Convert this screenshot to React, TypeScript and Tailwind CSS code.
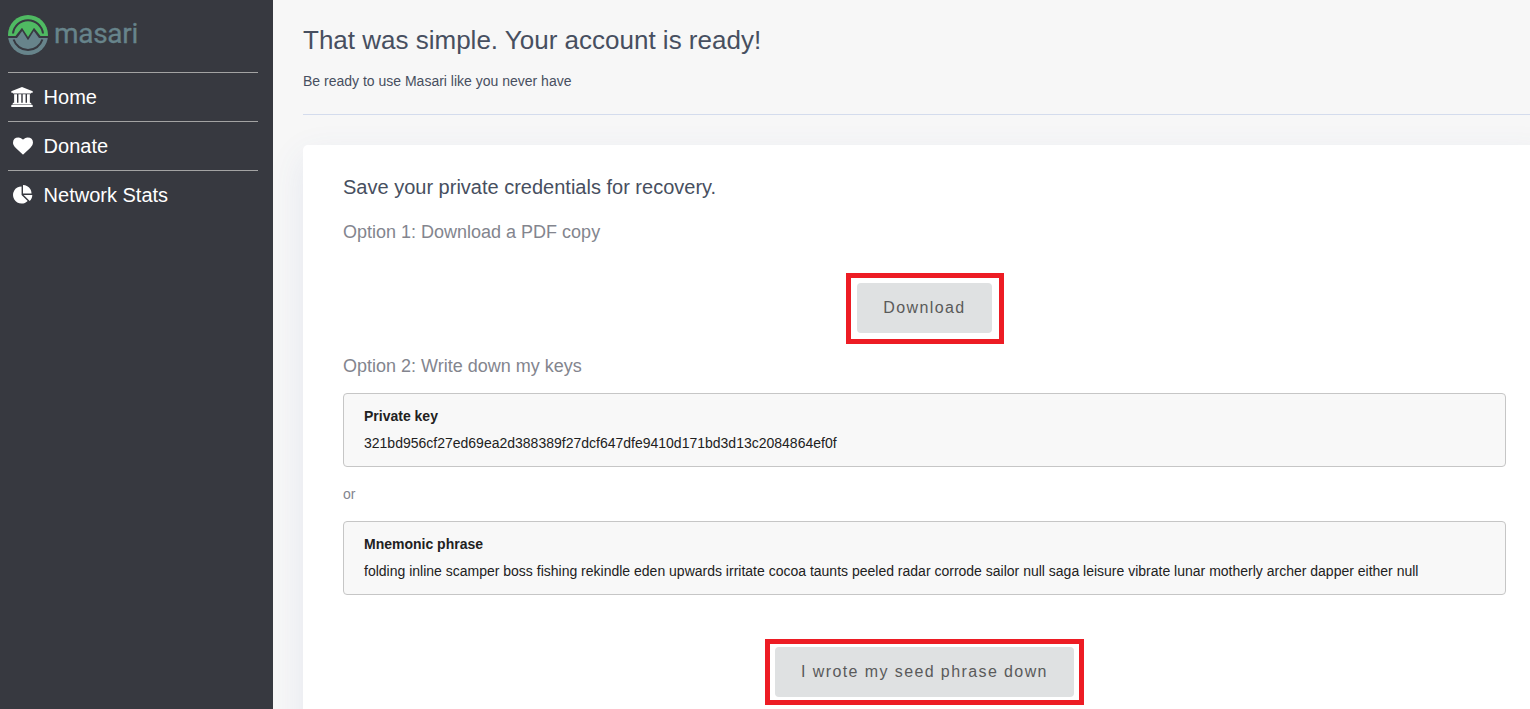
import type { ReactNode } from "react";

const ICONS = {
  home: {
    box: "0 0 1920 1792",
    size: "w-[22px] h-[20px] mr-[2px]",
    d: "M960 0l960 384v128h-128q0 26-20.5 45t-48.5 19h-1526q-28 0-48.5-19t-20.5-45h-128v-128zm-704 640h256v768h128v-768h256v768h128v-768h256v768h128v-768h256v768h59q28 0 48.5 19t20.5 45v64h-1664v-64q0-26 20.5-45t48.5-19h59v-768zm1595 960q28 0 48.5 19t20.5 45v128h-1920v-128q0-26 20.5-45t48.5-19h1782z",
  },
  heart: {
    box: "0 0 1792 1792",
    size: "w-[20px] h-[20px]",
    d: "M896 1664q-26 0-44-18l-624-602q-10-8-27.5-26t-55.5-65.5-68-97.5-53.5-121-23.5-138q0-220 127-344t351-124q62 0 126.5 21.5t120 58 95.5 68.5 76 68q36-36 76-68t95.5-68.5 120-58 126.5-21.5q224 0 351 124t127 344q0 221-229 450l-623 600q-18 18-44 18z",
  },
  pie: {
    box: "0 0 1792 1792",
    size: "w-[20px] h-[20px]",
    d: "M768 890l546 546q-106 108-247.5 168t-298.5 60q-209 0-385.5-103t-279.5-279.5-103-385.5 103-385.5 279.5-279.5 385.5-103v762zm187 6h773q0 157-60 298.5t-168 247.5zm709-128h-768v-768q209 0 385.5 103t279.5 279.5 103 385.5z",
  },
};

function Logo() {
  return (
    <div className="flex h-[40px] items-center">
      <svg viewBox="0 0 40 40" className="h-[40px] w-[40px] shrink-0">
        <clipPath id="disc">
          <circle cx="20" cy="20" r="20" />
        </clipPath>
        <g clipPath="url(#disc)">
          <path fill="#4fba62" d="M0 0H40V21H32.500L26 12.800L20 22L14 12.800L7.500 21H0Z" />
          <path fill="#67848b" d="M0 40V23H9L14.200 16L20 25.300L25.800 16L31 23H40V40Z" />
        </g>
        <path fill="none" stroke="#373940" strokeWidth="2" d="M5 18.500A15.100 15.100 0 0 1 35 18.500" />
        <path fill="none" stroke="#373940" strokeWidth="2" d="M5.600 24.500A15.100 15.100 0 0 0 34.400 24.500" />
      </svg>
      <span className="relative -top-px ml-[6px] font-['Roboto',sans-serif] text-[28px] font-normal leading-[36px] tracking-[-0.3px] text-[#67848b] [-webkit-text-stroke:0.3px_#67848b]">
        masari
      </span>
    </div>
  );
}

function NavItem({ icon, children }: { icon: keyof typeof ICONS; children: ReactNode }) {
  const { box, size, d } = ICONS[icon];
  return (
    <a className="flex h-[49px] items-center border-t border-[#a3a3a3] pl-[2px] text-[20px] text-white">
      <span className="flex w-[25px] justify-center">
        <svg viewBox={box} className={size} fill="currentColor">
          <path d={d} />
        </svg>
      </span>
      <span className="ml-[8.6px]">{children}</span>
    </a>
  );
}

function HighlightedButton({ width, ring, children }: { width: string; ring: string; children: ReactNode }) {
  return (
    <div className={`relative ${width}`}>
      <button className="block h-[50px] w-full whitespace-nowrap rounded-[4px] bg-[#dfe1e2] text-[16px] tracking-[1.4px] text-[#5a5a5a]">
        {children}
      </button>
      <span className={`pointer-events-none absolute border-[5px] border-[#ed1c24] ${ring}`} />
    </div>
  );
}

function KeyBox({ title, value }: { title: string; value: string }) {
  return (
    <section className="h-[74px] rounded-[4px] border border-[#c6c6c6] bg-[#f8f8f8] px-[20px] pt-[9px] text-[14px] leading-[27px] text-[#212121]">
      <h4 className="font-bold">{title}</h4>
      <p>{value}</p>
    </section>
  );
}

export default function App() {
  return (
    <div className="flex h-[709px] w-[1530px] overflow-hidden bg-[#f7f7f7] font-['Liberation_Sans',Arial,sans-serif]">
      <aside className="z-10 w-[273px] shrink-0 bg-[#373940] pl-[8px] pr-[15px] pt-[15px]">
        <Logo />
        <nav className="mt-[17px]">
          <NavItem icon="home">Home</NavItem>
          <NavItem icon="heart">Donate</NavItem>
          <NavItem icon="pie">Network Stats</NavItem>
        </nav>
      </aside>
      <main className="w-[1273px] shrink-0 pl-[30px]">
        <header className="h-[115px] border-b border-[#d4dced] pt-[24px] text-[#474f60]">
          <h1 className="text-[26px] leading-[32px]">That was simple. Your account is ready!</h1>
          <p className="mt-[15px] text-[14px] leading-[20px]">Be ready to use Masari like you never have</p>
        </header>
        <div className="mt-[30px] h-[620px] rounded-[5px] bg-white px-[40px] pt-[30px] shadow-[0_12px_36px_rgba(69,101,173,0.1)]">
          <h2 className="text-[20px] leading-[24px] text-[#474f60]">Save your private credentials for recovery.</h2>
          <h3 className="mt-[21px] text-[18px] leading-[24px] text-[#83858e]">Option 1: Download a PDF copy</h3>
          <div className="mt-[39px] flex justify-center">
            <HighlightedButton width="w-[135px]" ring="-left-[11px] -right-[12px] -top-[10px] -bottom-[11px]">
              Download
            </HighlightedButton>
          </div>
          <h3 className="mb-[15px] mt-[21px] text-[18px] leading-[24px] text-[#83858e]">Option 2: Write down my keys</h3>
          <KeyBox title="Private key" value="321bd956cf27ed69ea2d388389f27dcf647dfe9410d171bd3d13c2084864ef0f" />
          <p className="flex h-[54px] items-center text-[14px] text-[#83858e]">or</p>
          <KeyBox
            title="Mnemonic phrase"
            value="folding inline scamper boss fishing rekindle eden upwards irritate cocoa taunts peeled radar corrode sailor null saga leisure vibrate lunar motherly archer dapper either null"
          />
          <div className="mt-[52px] flex justify-center">
            <HighlightedButton width="w-[299px]" ring="-left-[10px] -right-[10px] -top-[8px] -bottom-[8px]">
              I wrote my seed phrase down
            </HighlightedButton>
          </div>
        </div>
      </main>
    </div>
  );
}
